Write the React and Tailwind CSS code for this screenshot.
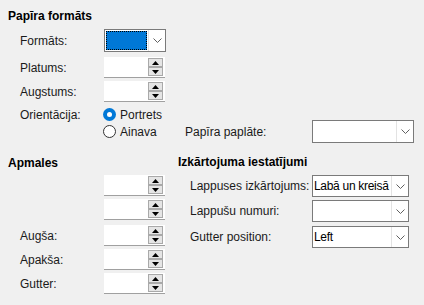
import React from 'react';

const Chevron = () => (
  <svg width="9" height="5" viewBox="0 0 9 5" className="block">
    <path d="M0.5 0.5 L4.5 4.5 L8.5 0.5" fill="none" stroke="#606060" strokeWidth="1" />
  </svg>
);

const Combo = ({ value, width = 'w-[97px]', height = 'h-[22px]', focused }) => (
  <div className={`${width} ${height} flex border border-[#7a7a7a] bg-white`}>
    {focused ? (
      <div className="flex-1 m-px border border-dotted border-black bg-[#0078d7]" />
    ) : (
      <div className="flex-1 flex items-center pl-px leading-none text-black whitespace-nowrap overflow-hidden tracking-[-0.3px]">{value}</div>
    )}
    <div className="w-[17px] shrink-0 flex items-center justify-center border-l border-[#e3e3e3] bg-white">
      <Chevron />
    </div>
  </div>
);

const SpinBtn = ({ up }) => (
  <div className="w-[15px] h-[9px] flex items-center justify-center border border-[#a9a9a9] bg-[#e5e5e5]">
    <svg width="7" height="4" viewBox="0 0 7 4" className="block">
      {up ? <path d="M3.5 0 L7 4 L0 4 Z" fill="#000" /> : <path d="M0 0 L7 0 L3.5 4 Z" fill="#000" />}
    </svg>
  </div>
);

const Spin = () => (
  <div className="w-[61px] h-[21px] flex items-center bg-white border-b border-[#a0a0a0]">
    <div className="flex-1" />
    <div className="flex flex-col pr-[2px]">
      <SpinBtn up />
      <SpinBtn />
    </div>
  </div>
);

const Radio = ({ checked, label }) => (
  <div className="flex items-center gap-[4px] h-[17px]">
    {checked ? (
      <div className="w-[13px] h-[13px] rounded-full bg-[#0078d7] flex items-center justify-center">
        <div className="w-[5px] h-[5px] rounded-full bg-white" />
      </div>
    ) : (
      <div className="w-[13px] h-[13px] rounded-full border border-[#333333] bg-white" />
    )}
    <span>{label}</span>
  </div>
);

const Row = ({ label, children, labelW = 'w-[84px]', className = '' }) => (
  <div className={`flex items-center ${className}`}>
    <span className={`${labelW} shrink-0 whitespace-nowrap`}>{label}</span>
    {children}
  </div>
);

export default function App() {
  return (
    <div className="w-[424px] h-[305px] bg-[#f0f0f0] text-[12px] text-[#1a1a1a] overflow-hidden pt-[8px]" style={{ fontFamily: '"Liberation Sans", Arial, sans-serif' }}>
      <div className="pl-[8px]">
        <div className="font-bold h-[16px] leading-[16px] text-black">Papīra formāts</div>
        <div className="pl-[12px] mt-[5px] flex flex-col">
          <Row label="Formāts:">
            <Combo focused width="w-[62px]" height="h-[23px]" />
          </Row>
          <Row label="Platums:" className="mt-[5px]">
            <Spin />
          </Row>
          <Row label="Augstums:" className="mt-[3px]">
            <Spin />
          </Row>
          <div className="flex mt-[4px]">
            <span className="w-[84px] shrink-0 leading-[17px] pt-[1px]">Orientācija:</span>
            <div className="flex flex-col w-[81px] shrink-0 -ml-[1px]">
              <Radio checked label="Portrets" />
              <Radio label="Ainava" />
            </div>
            <div className="flex items-center self-end -mb-[3px] ml-[1px]">
              <span className="w-[127px] shrink-0 whitespace-nowrap">Papīra paplāte:</span>
              <Combo width="w-[102px]" height="h-[23px]" />
            </div>
          </div>
        </div>
      </div>

      <div className="flex pl-[8px] mt-[15px]">
        <div className="w-[170px] shrink-0">
          <div className="font-bold h-[16px] leading-[16px] text-black">Apmales</div>
          <div className="pl-[12px] mt-[4px] flex flex-col gap-[3px]">
            <Row label=""><Spin /></Row>
            <Row label=""><Spin /></Row>
            <Row label="Augša:" className="mt-[2px]"><Spin /></Row>
            <Row label="Apakša:"><Spin /></Row>
            <Row label="Gutter:"><Spin /></Row>
          </div>
        </div>
        <div className="flex-1 -mt-[1px]">
          <div className="font-bold h-[16px] leading-[16px] text-black">Izkārtojuma iestatījumi</div>
          <div className="pl-[12px] mt-[5px] flex flex-col gap-[3px]">
            <Row label="Lappuses izkārtojums:" labelW="w-[122px]">
              <Combo value="Labā un kreisā" />
            </Row>
            <Row label="Lappušu numuri:" labelW="w-[122px]">
              <Combo />
            </Row>
            <Row label="Gutter position:" labelW="w-[122px]" className="mt-[1px]">
              <Combo value="Left" />
            </Row>
          </div>
        </div>
      </div>
    </div>
  );
}
